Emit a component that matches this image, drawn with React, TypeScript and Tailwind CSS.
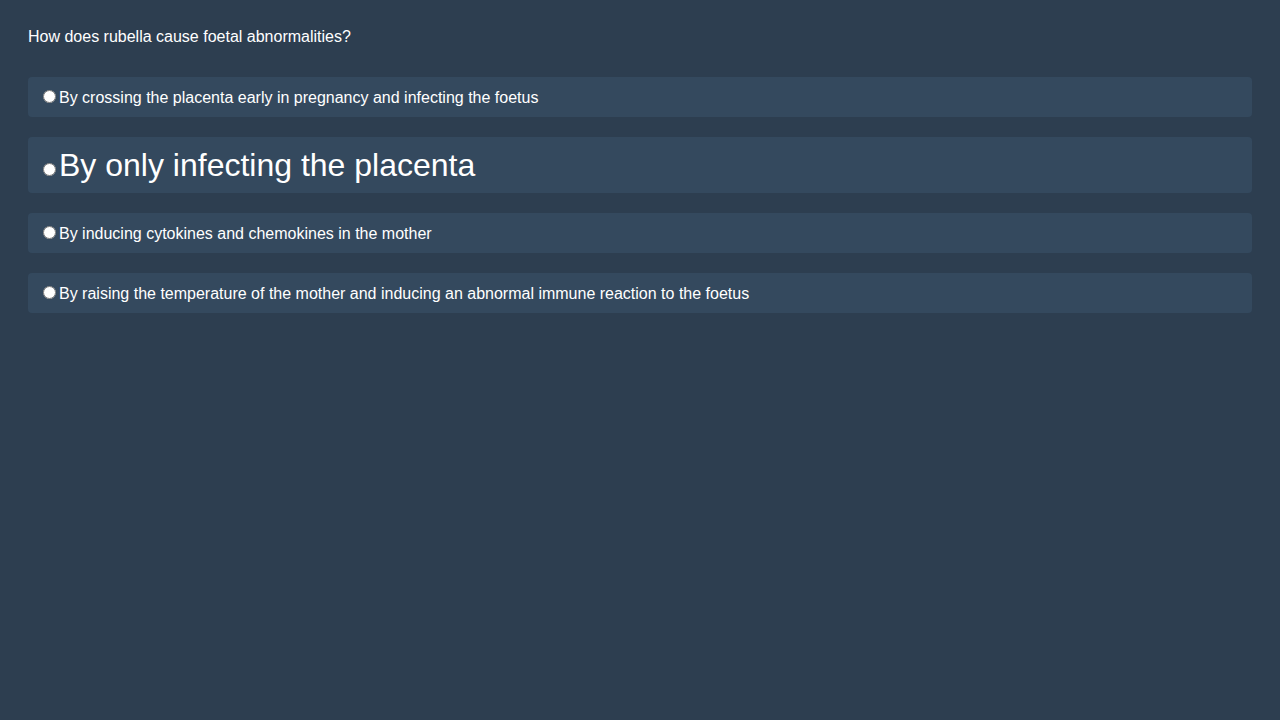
import React, { useState } from 'react';

const options = [
  { id: 'a', text: 'By crossing the placenta early in pregnancy and infecting the foetus', big: false },
  { id: 'b', text: 'By only infecting the placenta', big: true },
  { id: 'c', text: 'By inducing cytokines and chemokines in the mother', big: false },
  { id: 'd', text: 'By raising the temperature of the mother and inducing an abnormal immune reaction to the foetus', big: false },
];

export default function App() {
  const [picked, setPicked] = useState('');

  return (
    <div
      className="min-h-screen w-full bg-[#2d3e50] px-[28px] pt-[28px] text-white"
      style={{ fontFamily: '"Liberation Sans", Arial, sans-serif' }}
    >
      <p className="text-[16px] leading-[18px] mb-[31px]">How does rubella cause foetal abnormalities?</p>

      <div className="flex flex-col gap-[20px]">
        {options.map((o) => (
          <label
            key={o.id}
            className={
              o.big
                ? 'block rounded bg-[#34495e] px-[10px] py-[10px] text-[32px] leading-[36px]'
                : 'block rounded bg-[#34495e] px-[10px] py-[10px] text-[16px] leading-[19px]'
            }
          >
            <input
              type="radio"
              name="q"
              checked={picked === o.id}
              onChange={() => setPicked(o.id)}
              className="mt-[3px] mr-[3px] ml-[5px] mb-0 h-[13px] w-[13px] align-baseline"
            />
            {o.text}
          </label>
        ))}
      </div>
    </div>
  );
}
